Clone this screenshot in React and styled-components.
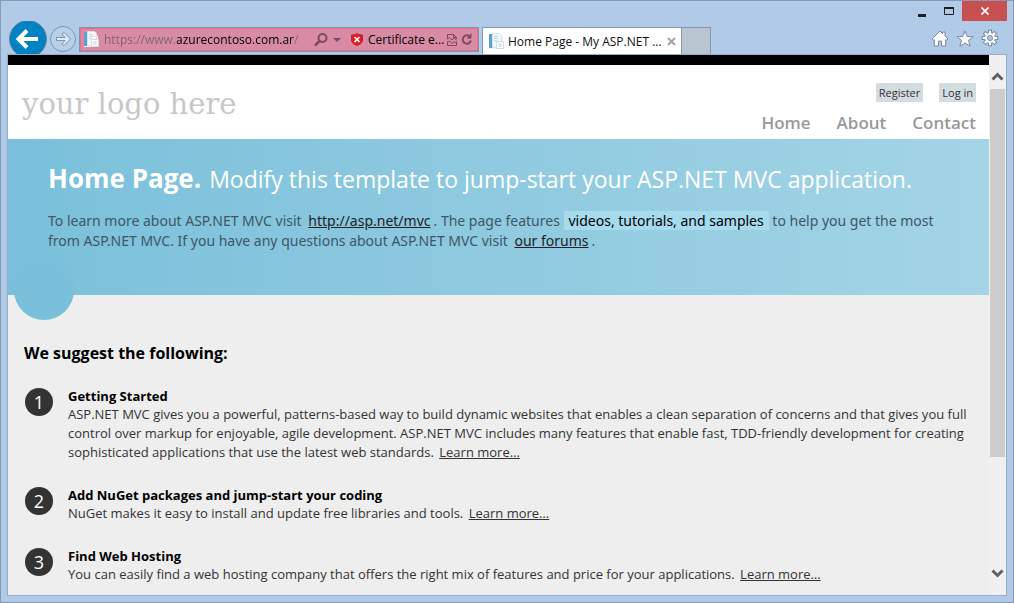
import React from "react";
import styled, { createGlobalStyle } from "styled-components";

const Global = createGlobalStyle`
  * { box-sizing: border-box; }
  body { margin: 0; font-family: "Open Sans", "Noto Sans", sans-serif; }
  button, input { font: inherit; margin: 0; padding: 0; border: 0; background: none; }
  h1, h2, h3, p, ol { margin: 0; padding: 0; }
`;

const Window = styled.div`
  height: 100vh;
  display: flex;
  flex-direction: column;
  padding: 0 7px 7px;
  background: #b0cae7;
  border: 1px solid #8698b3;
  overflow: hidden;
`;

const TitleBar = styled.div`
  display: flex;
  justify-content: flex-end;
  height: 20px;
  margin-right: -1px;
  flex: none;
`;

const WindowButton = styled.button`
  width: ${(p) => (p.$close ? 45 : 27)}px;
  height: 20px;
  display: flex;
  align-items: center;
  justify-content: center;
  background: ${(p) => (p.$close ? "#c75050" : "transparent")};
`;

const NavBar = styled.div`
  display: flex;
  height: 34px;
  flex: none;
  align-items: flex-end;
`;

const BackButton = styled.button`
  width: 40px;
  height: 34px;
  svg { display: block; }
`;

const ForwardButton = styled.button`
  width: 31px;
  height: 31px;
  svg { display: block; }
`;

const AddressBar = styled.form`
  width: 400px;
  height: 25px;
  margin-bottom: 3px;
  display: flex;
  align-items: center;
  padding: 0 3px;
  border: 1px solid #7d93b0;
  box-shadow: inset 0 0 0 1px #ee6c86;
  background: #d98ba6;
`;

const Url = styled.input.attrs({ type: "text" })`
  flex: 1;
  min-width: 0;
  height: 21px;
  margin-left: 4px;
  font-size: 12px;
  color: #000;
  -webkit-text-fill-color: transparent;
  background: linear-gradient(90deg, #80656f 73px, #000 73px, #000 190px, #80656f 190px);
  background-clip: text;
  outline: none;
`;

const IconButton = styled.button`
  width: ${(p) => p.$w}px;
  height: 20px;
  display: flex;
  align-items: center;
  justify-content: center;
`;

const CertificateButton = styled.button`
  width: 102px;
  display: flex;
  align-items: center;
  gap: 5px;
  padding-left: 8px;
  font-size: 12px;
  color: #000;
  white-space: nowrap;
`;

const Tabs = styled.div`
  display: flex;
  height: 28px;
  margin-left: 3px;
`;

const Tab = styled.div`
  width: 200px;
  display: flex;
  align-items: center;
  gap: 3px;
  padding: 0 3px 0 5px;
  background: #fff;
  border: 1px solid #8197b4;
  border-bottom: 0;
  font-size: 12px;
  color: #111;
  white-space: nowrap;
`;

const TabTitle = styled.span`
  flex: 1;
`;

const NewTab = styled.button`
  width: 29px;
  background: #bac5d2;
  border: 1px solid #8197b4;
  border-width: 1px 1px 0 0;
`;

const Tools = styled.div`
  display: flex;
  gap: 1px;
  margin: 0 4px 7px auto;
`;

const Viewport = styled.div`
  flex: 1;
  min-height: 0;
  display: flex;
  background: #eee;
  box-shadow: 0 0 0 1px #94aecb;
`;

const Page = styled.main`
  flex: 1;
  min-width: 0;
  overflow: hidden;
  border-top: 10px solid #000;
`;

const Header = styled.header`
  height: 74px;
  display: flex;
  justify-content: space-between;
  padding: 0 13px 0 14px;
  background: #fff;
`;

const Logo = styled.a`
  padding-top: 23px;
  font-family: "DejaVu Serif", serif;
  font-size: 29px;
  line-height: 32px;
  color: #c8c8c8;
  text-decoration: none;
`;

const HeaderLinks = styled.div`
  display: flex;
  flex-direction: column;
  align-items: flex-end;
  padding-top: 18px;
  gap: 9px;
`;

const Account = styled.div`
  display: flex;
  gap: 16px;
`;

const AccountLink = styled.a`
  padding: 0 3px;
  background: #d3dce0;
  color: #333;
  font-size: 11px;
  line-height: 19px;
  text-decoration: none;
`;

const Menu = styled.nav`
  display: flex;
  gap: 26px;
`;

const MenuLink = styled.a`
  color: #999;
  font-size: 17px;
  font-weight: 600;
  line-height: 24px;
  text-decoration: none;
`;

const Hero = styled.section`
  position: relative;
  height: 156px;
  padding: 21px 40px 0;
  background: linear-gradient(90deg, #7ac0da, #a4d4e6);
  color: #3e5667;
  &::after {
    content: "";
    position: absolute;
    left: 6px;
    bottom: -25px;
    width: 60px;
    height: 60px;
    border-radius: 50%;
    background: #7ac0da;
  }
`;

const HeroTitle = styled.div`
  display: flex;
  align-items: baseline;
  gap: 8px;
  color: #fff;
  line-height: 36px;
  white-space: nowrap;
  h1 { font-size: 26px; font-weight: 700; }
  h2 { font-size: 23px; font-weight: 400; }
`;

const HeroText = styled.p`
  margin-top: 14px;
  font-family: "Noto Sans", sans-serif;
  font-size: 14px;
  line-height: 20px;
  white-space: nowrap;
  a { color: #222; margin: 0 3px; }
  mark { background: #a6dbed; color: #000; padding: 0 5px; }
`;

const Content = styled.section`
  padding: 46px 16px 0;
`;

const ContentTitle = styled.h3`
  font-size: 16px;
  line-height: 24px;
  color: #000;
`;

const Steps = styled.ol`
  list-style: none;
  padding-top: 22px;
`;

const Step = styled.li`
  display: flex;
  gap: 15px;
  margin-bottom: 24px;
`;

const Badge = styled.span`
  width: 28px;
  height: 28px;
  margin: 1px 0 0 1px;
  flex: none;
  border-radius: 50%;
  background: #333;
  color: #fff;
  font-size: 18px;
  font-weight: 500;
  line-height: 28px;
  text-align: center;
`;

const StepBody = styled.div`
  font-size: 13px;
  line-height: 19px;
  color: #333;
  white-space: nowrap;
  h3 { font-size: 13px; line-height: 18px; color: #000; }
  a { color: #333; margin-left: 2px; }
`;

const Scrollbar = styled.div`
  width: 17px;
  flex: none;
  display: flex;
  flex-direction: column;
  align-items: center;
  background: #f0f0f0;
`;

const ScrollButton = styled.button`
  width: 17px;
  height: 34px;
  padding: ${(p) => (p.$up ? "8px 0 0" : "0 0 8px")};
  svg { display: block; margin: 0 auto; }
`;

const Track = styled.div`
  flex: 1;
  width: 15px;
`;

const Thumb = styled.div`
  height: 78%;
  background: #cdcdcd;
`;

const PageIcon = () => (
  <svg width="17" height="17" viewBox="0 0 17 17" aria-hidden="true">
    <path d="M1 1h10l4 4v11H1z" fill="#eef3f7" />
    <path d="M1 1h3v14H1z" fill="#58a4d0" />
    <path d="M4.500.5h7l2 2v12h-9z" fill="#f4f7f9" stroke="#dbe2e8" />
    <path d="M6 3.500h4M6 5.500h4M6 7.500h3" stroke="#ccd6de" />
    <path d="M8.500 8.500h7v7h-7z" fill="#fff" stroke="#d3dbe2" />
    <path d="M10 11h4M10 13h4" stroke="#c7d0d9" />
  </svg>
);

const steps = [
  {
    title: "Getting Started",
    lines: [
      "ASP.NET MVC gives you a powerful, patterns-based way to build dynamic websites that enables a clean separation of concerns and that gives you full",
      "control over markup for enjoyable, agile development. ASP.NET MVC includes many features that enable fast, TDD-friendly development for creating",
      "sophisticated applications that use the latest web standards.",
    ],
  },
  {
    title: "Add NuGet packages and jump-start your coding",
    lines: ["NuGet makes it easy to install and update free libraries and tools."],
  },
  {
    title: "Find Web Hosting",
    lines: ["You can easily find a web hosting company that offers the right mix of features and price for your applications."],
  },
];

export default function App() {
  return (
    <>
      <Global />
      <Window>
        <TitleBar>
          <WindowButton aria-label="Minimize">
            <svg width="10" height="11"><path d="M1 8h8v3H1z" fill="#1e1e1e" /></svg>
          </WindowButton>
          <WindowButton aria-label="Maximize">
            <svg width="10" height="10"><path d="M.5 1.500h9v7h-9z" fill="none" stroke="#1e1e1e" /><path d="M0 1h10v2H0z" fill="#1e1e1e" /></svg>
          </WindowButton>
          <WindowButton $close aria-label="Close">
            <svg width="8" height="8"><path d="M.5.5l7 7M7.500.5l-7 7" stroke="#fff" strokeWidth="1.700" /></svg>
          </WindowButton>
        </TitleBar>

        <NavBar>
          <BackButton aria-label="Back">
            <svg width="40" height="34">
              <circle cx="20" cy="18" r="18.500" fill="#0082c3" stroke="#6f8296" />
              <path d="M11 18h19M19 9.500L10.500 18l8.500 8.500" fill="none" stroke="#fff" strokeWidth="4" />
            </svg>
          </BackButton>
          <ForwardButton aria-label="Forward">
            <svg width="31" height="31">
              <circle cx="15" cy="15" r="12.500" fill="#b7cfe9" stroke="#7e94b0" />
              <path d="M8.500 13.500h8.500l-3-3.500 2-1.500 6.500 6.500-6.500 6.500-2-1.500 3-3.500H8.500z" fill="#dfeaf6" stroke="#7e94b0" />
            </svg>
          </ForwardButton>
          <AddressBar onSubmit={(e) => e.preventDefault()}>
            <PageIcon />
            <Url aria-label="Address" defaultValue="https://www.azurecontoso.com.ar/" />
            <IconButton type="submit" $w={20} aria-label="Search">
              <svg width="14" height="14"><circle cx="8.500" cy="5" r="4" fill="none" stroke="#7c4c5e" strokeWidth="2" /><path d="M5.500 8L1 12.500" stroke="#7c4c5e" strokeWidth="2.500" /></svg>
            </IconButton>
            <IconButton type="button" $w={12} aria-label="Show address list">
              <svg width="8" height="4"><path d="M0 0h8L4 4z" fill="#7c4c5e" /></svg>
            </IconButton>
            <CertificateButton type="button">
              <svg width="12" height="13"><path d="M6 .5c2 1.200 3.500 1.500 5.500 1.500v5c0 3-2.500 4.500-5.500 5.500C3 11.500.5 10 .5 7V2C2.500 2 4 1.700 6 .5z" fill="#e11b22" stroke="#c4252c" /><path d="M3.500 4l5 5M8.500 4l-5 5" stroke="#fff" strokeWidth="1.700" /></svg>
              Certificate e...
            </CertificateButton>
            <IconButton type="button" $w={14} aria-label="Compatibility view">
              <svg width="10" height="12"><path d="M.5 5V.5h6l3 3V5M6.500.5v3h3M.5 7.500v4h9v-4M.5 5l2-1.500L5 6l2-2 2.500 2M.5 8.500l2-1.500L5 9.500l2-2 2.500 2" fill="none" stroke="#7c4c5e" /></svg>
            </IconButton>
            <IconButton type="button" $w={16} aria-label="Refresh">
              <svg width="12" height="13"><path d="M8.500 3.200A4.200 4.200 0 1 0 10 7.500" fill="none" stroke="#7c4c5e" strokeWidth="2" /><path d="M10.500 0v5.500H5.500z" fill="#7c4c5e" /></svg>
            </IconButton>
          </AddressBar>
          <Tabs>
            <Tab>
              <PageIcon />
              <TabTitle>Home Page - My ASP.NET ...</TabTitle>
              <IconButton $w={13} aria-label="Close tab">
                <svg width="9" height="9"><path d="M1 1l7 7M8 1L1 8" stroke="#a3a3a3" strokeWidth="2" /></svg>
              </IconButton>
            </Tab>
            <NewTab aria-label="New tab" />
          </Tabs>
          <Tools>
            <IconButton $w={24} aria-label="Home">
              <svg width="18" height="17"><path d="M9 1L1 9l1.500 1.200.8-.7V16H7.500v-5h3v5h4.200V9.500l.8.7L17 9l-3-3V2h-2.500v1.500z" fill="#fff" stroke="#7389a4" /></svg>
            </IconButton>
            <IconButton $w={24} aria-label="Favorites">
              <svg width="18" height="17"><path d="M9 1l2.200 5.500 6 .2-4.700 3.700 1.700 5.800L9 12.900l-5.200 3.300 1.700-5.800L.8 6.700l6-.2z" fill="#fff" stroke="#7389a4" /></svg>
            </IconButton>
            <IconButton $w={24} aria-label="Settings">
              <svg width="18" height="18" viewBox="-9 -9 18 18">
                <g fill="#fff" stroke="#7389a4">
                  {[0, 45, 90, 135, 180, 225, 270, 315].map((a) => (
                    <rect key={a} x="-1.500" y="-7.800" width="3" height="4" transform={`rotate(${a})`} />
                  ))}
                  <circle r="5.500" />
                </g>
                {[0, 45, 90, 135].map((a) => (
                  <rect key={a} x="-1" y="-7" width="2" height="14" fill="#fff" transform={`rotate(${a})`} />
                ))}
                <circle r="2.500" fill="#b0cae7" stroke="#7389a4" />
              </svg>
            </IconButton>
          </Tools>
        </NavBar>

        <Viewport>
          <Page>
            <Header>
              <Logo href="#">your logo here</Logo>
              <HeaderLinks>
                <Account>
                  <AccountLink href="#register">Register</AccountLink>
                  <AccountLink href="#login">Log in</AccountLink>
                </Account>
                <Menu>
                  <MenuLink href="#home">Home</MenuLink>
                  <MenuLink href="#about">About</MenuLink>
                  <MenuLink href="#contact">Contact</MenuLink>
                </Menu>
              </HeaderLinks>
            </Header>
            <Hero>
              <HeroTitle>
                <h1>Home Page.</h1>
                <h2>Modify this template to jump-start your ASP.NET MVC application.</h2>
              </HeroTitle>
              <HeroText>
                To learn more about ASP.NET MVC visit <a href="#mvc">http://asp.net/mvc</a>. The page features <mark>videos, tutorials, and samples</mark> to help you get the most
                <br />
                from ASP.NET MVC. If you have any questions about ASP.NET MVC visit <a href="#forums">our forums</a>.
              </HeroText>
            </Hero>
            <Content>
              <ContentTitle>We suggest the following:</ContentTitle>
              <Steps>
                {steps.map((s, i) => (
                  <Step key={s.title}>
                    <Badge>{i + 1}</Badge>
                    <StepBody>
                      <h3>{s.title}</h3>
                      <p>
                        {s.lines.map((line, n) => (
                          <React.Fragment key={line}>
                            {n > 0 && <br />}
                            {line}
                          </React.Fragment>
                        ))}{" "}
                        <a href={`#step${i + 1}`}>Learn more…</a>
                      </p>
                    </StepBody>
                  </Step>
                ))}
              </Steps>
            </Content>
          </Page>
          <Scrollbar>
            <ScrollButton $up aria-label="Scroll up">
              <svg width="13" height="10"><path d="M1.500 8.500l5-5 5 5" fill="none" stroke="#606060" strokeWidth="3" /></svg>
            </ScrollButton>
            <Track><Thumb /></Track>
            <ScrollButton aria-label="Scroll down">
              <svg width="13" height="10"><path d="M1.500 1.500l5 5 5-5" fill="none" stroke="#606060" strokeWidth="3" /></svg>
            </ScrollButton>
          </Scrollbar>
        </Viewport>
      </Window>
    </>
  );
}
